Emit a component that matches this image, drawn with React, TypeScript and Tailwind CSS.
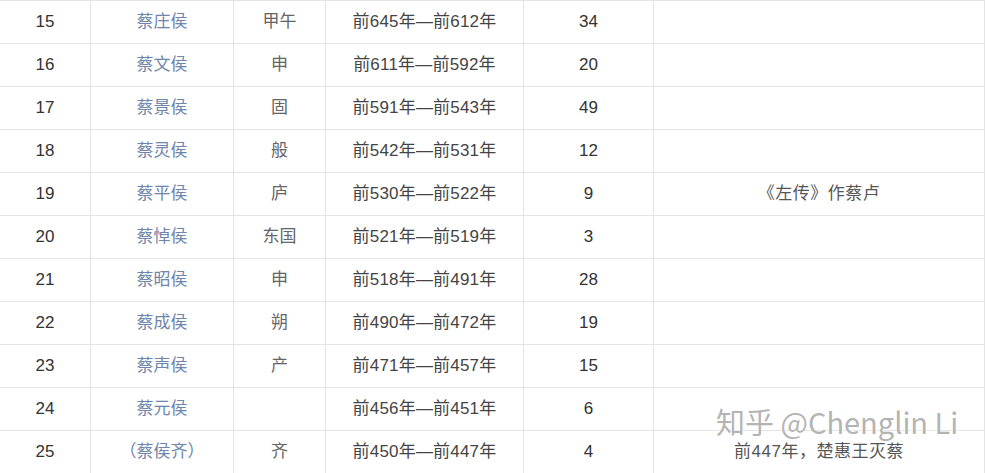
import React from 'react';

type Row = { no: number; title: string; name: string; reign: string; years: string; note?: string };

const rows: Row[] = [
  { no: 15, title: '蔡庄侯', name: '甲午', reign: '前645年—前612年', years: '34' },
  { no: 16, title: '蔡文侯', name: '申', reign: '前611年—前592年', years: '20' },
  { no: 17, title: '蔡景侯', name: '固', reign: '前591年—前543年', years: '49' },
  { no: 18, title: '蔡灵侯', name: '般', reign: '前542年—前531年', years: '12' },
  { no: 19, title: '蔡平侯', name: '庐', reign: '前530年—前522年', years: '9', note: '《左传》作蔡卢' },
  { no: 20, title: '蔡悼侯', name: '东国', reign: '前521年—前519年', years: '3' },
  { no: 21, title: '蔡昭侯', name: '申', reign: '前518年—前491年', years: '28' },
  { no: 22, title: '蔡成侯', name: '朔', reign: '前490年—前472年', years: '19' },
  { no: 23, title: '蔡声侯', name: '产', reign: '前471年—前457年', years: '15' },
  { no: 24, title: '蔡元侯', name: '', reign: '前456年—前451年', years: '6' },
  { no: 25, title: '（蔡侯齐）', name: '齐', reign: '前450年—前447年', years: '4', note: '前447年，楚惠王灭蔡' },
];

const font = { fontFamily: '"Liberation Sans", "Noto Sans CJK SC", sans-serif' };

const cell = 'h-[43px] flex items-center justify-center border-b border-r border-[#e4e4e4] text-[17px] whitespace-nowrap';

const App: React.FC = () => {
  return (
    <div className="relative w-[985px] h-[473px] overflow-hidden bg-white" style={font}>
      <div className="grid grid-cols-[91px_143px_92px_198px_130px_331px] border-t border-[#e4e4e4]">
        {rows.map(r => (
          <React.Fragment key={r.no}>
            <div className={`${cell} text-[#333]`}>{r.no}</div>
            <div className={`${cell} text-[#7085aa]`}>{r.title}</div>
            <div className={`${cell} text-[#666]`}>{r.name}</div>
            <div className={`${cell} text-[#444] tracking-[0.2px]`}>{r.reign}</div>
            <div className={`${cell} text-[#333]`}>{r.years}</div>
            <div className={`${cell} text-[#555] tracking-[0.5px]`}>{r.note}</div>
          </React.Fragment>
        ))}
      </div>

      {/* zhihu watermark */}
      <div
        className="absolute left-[716px] top-[407px] text-[29px] leading-none text-[#aaa]/90 whitespace-nowrap [text-shadow:0_0_2px_#fff,0_0_1px_#fff]"
        style={{ fontFamily: '"Noto Sans CJK SC", "Liberation Sans", sans-serif' }}
      >
        知乎 @Chenglin Li
      </div>
    </div>
  );
};

export default App;
